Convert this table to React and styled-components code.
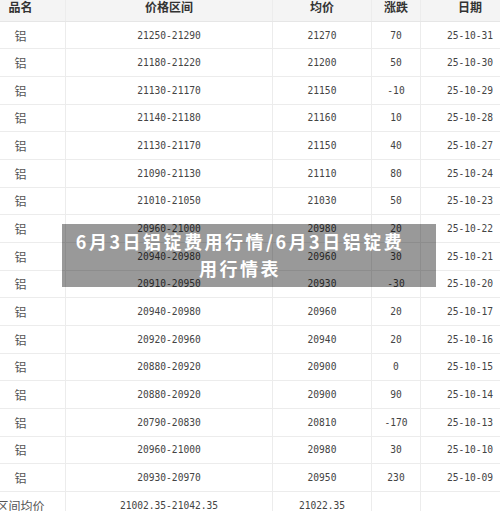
import styled, { createGlobalStyle } from "styled-components"

const rows = [
  ["21250-21290", "21270", "70", "25-10-31"],
  ["21180-21220", "21200", "50", "25-10-30"],
  ["21130-21170", "21150", "-10", "25-10-29"],
  ["21140-21180", "21160", "10", "25-10-28"],
  ["21130-21170", "21150", "40", "25-10-27"],
  ["21090-21130", "21110", "80", "25-10-24"],
  ["21010-21050", "21030", "50", "25-10-23"],
  ["20960-21000", "20980", "20", "25-10-22"],
  ["20940-20980", "20960", "30", "25-10-21"],
  ["20910-20950", "20930", "-30", "25-10-20"],
  ["20940-20980", "20960", "20", "25-10-17"],
  ["20920-20960", "20940", "20", "25-10-16"],
  ["20880-20920", "20900", "0", "25-10-15"],
  ["20880-20920", "20900", "90", "25-10-14"],
  ["20790-20830", "20810", "-170", "25-10-13"],
  ["20960-21000", "20980", "30", "25-10-10"],
  ["20930-20970", "20950", "230", "25-10-09"],
]

const GlobalStyle = createGlobalStyle`
  html, body {
    margin: 0;
    padding: 0;
    background: #fff;
    overflow: hidden;
  }
  body {
    font-family: "Noto Sans CJK SC", "Liberation Sans", sans-serif;
  }
`

export default function App() {
  return (
    <Page>
      <GlobalStyle />
      <Table>
        <HeadRow>
          <HeadCell>品名</HeadCell>
          <HeadCell>价格区间</HeadCell>
          <HeadCell>均价</HeadCell>
          <HeadCell>涨跌</HeadCell>
          <HeadCell>日期</HeadCell>
        </HeadRow>
        {rows.map((r, i) => (
          <Row key={i}>
            <Cell>铝</Cell>
            <Cell mono>{r[0]}</Cell>
            <Cell mono>{r[1]}</Cell>
            <Cell mono>{r[2]}</Cell>
            <Cell mono>{r[3]}</Cell>
          </Row>
        ))}
        <Row>
          <Cell>区间均价</Cell>
          <Cell mono>21002.35-21042.35</Cell>
          <Cell mono>21022.35</Cell>
          <Cell mono></Cell>
          <Cell mono></Cell>
        </Row>
      </Table>
      <Banner>
        6月3日铝锭费用行情/6月3日铝锭费<br />用行情表
      </Banner>
    </Page>
  )
}

const Page = styled.div`
  position: relative;
  width: 500px;
  height: 511px;
  overflow: hidden;
`

const Table = styled.div`
  width: 544px;
  margin: -7px 0 0 -24px;
`

const HeadRow = styled.div`
  display: grid;
  grid-template-columns: 90px 207px 99px 49px 99px;
  height: 28.7px;
  background: #f4f4f4;
  border-bottom: 1px solid #e6e6e6;
  box-sizing: border-box;
`

const Row = styled.div`
  display: grid;
  grid-template-columns: 90px 207px 99px 49px 99px;
  height: 27.67px;
  border-bottom: 1px solid #ececec;
  box-sizing: border-box;
`

const HeadCell = styled.div`
  display: flex;
  align-items: center;
  justify-content: center;
  border-right: 1px solid #ececec;
  font-size: 12px;
  line-height: 14px;
  font-weight: 700;
  color: #333;
`

const Cell = styled.div`
  display: flex;
  align-items: center;
  justify-content: center;
  border-right: 1px solid #ececec;
  color: ${(p) => (p.mono ? "#444" : "#555")};
  font-family: ${(p) =>
    p.mono ? '"DejaVu Sans Mono", monospace' : '"Noto Sans CJK SC", sans-serif'};
  font-size: ${(p) => (p.mono ? "9.6px" : "12px")};
`

const Banner = styled.div`
  position: absolute;
  left: 62px;
  top: 224px;
  width: 374px;
  height: 63px;
  box-sizing: border-box;
  padding: 4px 26px 0 8px;
  background: rgba(0, 0, 0, 0.4);
  color: #fff;
  font-size: 18px;
  font-weight: 700;
  letter-spacing: 2.5px;
  line-height: 27px;
  text-align: center;
  white-space: nowrap;
`
